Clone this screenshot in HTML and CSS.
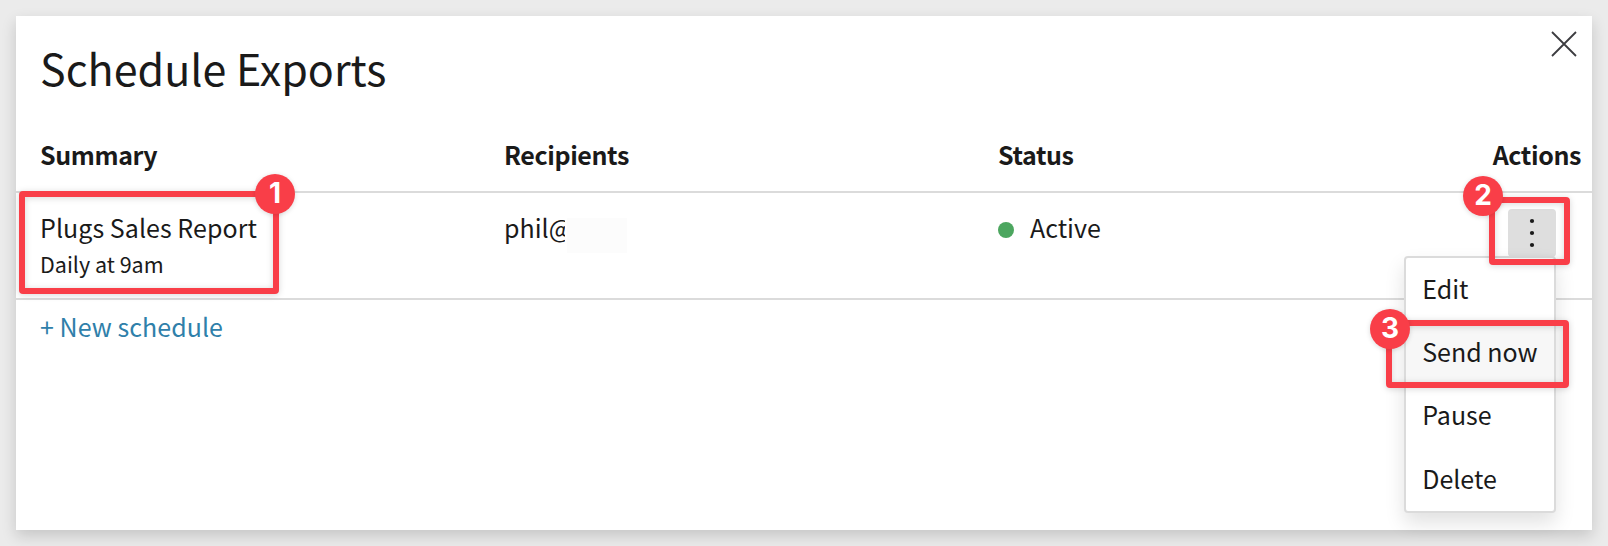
FILE: index.html
```html
<!DOCTYPE html>
<html lang="en">
<head>
<meta charset="utf-8">
<title>Schedule Exports</title>
<link rel="stylesheet" href="styles.css">
</head>
<body>
<main class="dialog">
  <header class="dialog-head">
    <h1 class="title"><span>Schedule Exports</span></h1>
    <svg class="close" width="28" height="28" viewBox="0 0 28 28"><path d="M2 2 26 26M26 2 2 26"/></svg>
  </header>
  <div class="row row-head">
    <span><span class="th">Summary</span></span><span><span class="th">Recipients</span></span><span><span class="th">Status</span></span><span class="right"><span class="th">Actions</span></span>
  </div>
  <div class="row row-body">
    <div class="summary"><span class="name">Plugs Sales Report</span><span class="when">Daily at 9am</span></div>
    <div class="recipient"><span class="email">phil@</span><span class="redacted"></span></div>
    <div class="status"><span class="dot"></span><span>Active</span></div>
    <div class="actions">
      <button class="more"><svg width="48" height="48" viewBox="0 0 48 48"><circle cx="24" cy="12" r="2.1"/><circle cx="24" cy="24" r="2.1"/><circle cx="24" cy="36" r="2.1"/></svg></button>
    </div>
  </div>
  <a class="new">+ New schedule</a>
</main>
<nav class="menu">
  <span class="item">Edit</span>
  <span class="item hover">Send now</span>
  <span class="item">Pause</span>
  <span class="item">Delete</span>
</nav>
<div class="mark mark-1"></div><div class="badge badge-1">1</div>
<div class="mark mark-2"></div><div class="badge badge-2">2</div>
<div class="mark mark-3"></div><div class="badge badge-3">3</div>
</body>
</html>
```
FILE: styles.css
```css
* { box-sizing: border-box; }
body {
  margin: 0;
  padding: 16px;
  width: 1608px;
  height: 546px;
  overflow: hidden;
  position: relative;
  background: #ebebeb;
  color: #1a1a1a;
  font: 25px/36px "Noto Sans CJK SC", "Noto Sans", sans-serif;
}
.dialog {
  height: 514px;
  background: #fff;
  box-shadow: 0 6px 14px rgba(0, 0, 0, .16);
}
.dialog-head {
  display: flex;
  justify-content: space-between;
  height: 120px;
  padding: 21px 14px 0 24px;
}
.title { margin: 0; font-size: 43px; line-height: 60px; font-weight: 400; }
.close { margin-top: -7px; fill: none; stroke: #3c3c40; stroke-width: 1.8; }
.row {
  display: grid;
  grid-template-columns: 464px 494px 320px 1fr;
  padding-left: 24px;
  border-bottom: 2px solid #dbdbdb;
}
.row-head { height: 57px; font-weight: 600; letter-spacing: -.4px; }
.right { text-align: right; padding-right: 11px; }
.row-body { height: 107px; padding-top: 16px; }
.summary { display: flex; flex-direction: column; }
.name, .new { letter-spacing: .05px; }
.when { font-size: 21.5px; line-height: 32px; margin-top: 3px; }
.recipient { display: flex; gap: 2px; }
.email { width: 61px; overflow: hidden; }
.redacted { width: 60px; height: 35px; margin-top: 9px; background: #fcfcfc; }
.status { display: flex; gap: 16px; }
.dot { width: 16px; height: 16px; margin-top: 13px; border-radius: 50%; background: #4ca65f; }
.actions { display: flex; justify-content: flex-end; padding-right: 36px; }
.more { width: 48px; height: 48px; padding: 0; border: 0; border-radius: 4px; background: #dedede; fill: #1a1a1a; }
.more svg { display: block; }
.new { display: block; width: max-content; margin: 8px 0 0 24px; color: #2f80aa; }
.menu {
  position: absolute;
  left: 1404px;
  top: 256px;
  width: 152px;
  height: 257px;
  display: grid;
  grid-template-rows: repeat(4, 1fr);
  background: #fff;
  border: 2px solid #dbdbdb;
  border-radius: 4px;
  box-shadow: 0 10px 20px rgba(0, 0, 0, .12);
}
.item { padding: 11.8px 0 0 16.2px; white-space: nowrap; }
.hover { background: #f7f7f7; }
.mark {
  position: absolute;
  border: 6px solid #f93e48;
  border-radius: 4px;
  filter: drop-shadow(0 1px 3px rgba(0, 0, 0, .16));
}
.mark-1 { left: 19px; top: 191px; width: 260px; height: 103px; }
.mark-2 { left: 1489px; top: 197px; width: 81px; height: 67.5px; }
.mark-3 { left: 1385.5px; top: 320px; width: 183px; height: 68px; }
.badge {
  position: absolute;
  width: 40px;
  height: 40px;
  border-radius: 50%;
  background: #f93e48;
  color: #fff;
  font: 700 28px/39px Inter, sans-serif;
  text-align: center;
  box-shadow: 0 1px 5px rgba(0, 0, 0, .15);
}
.badge-1 { left: 255px; top: 174px; }
.badge-2 { left: 1463px; top: 176px; }
.badge-3 { left: 1370px; top: 308.5px; }
```
